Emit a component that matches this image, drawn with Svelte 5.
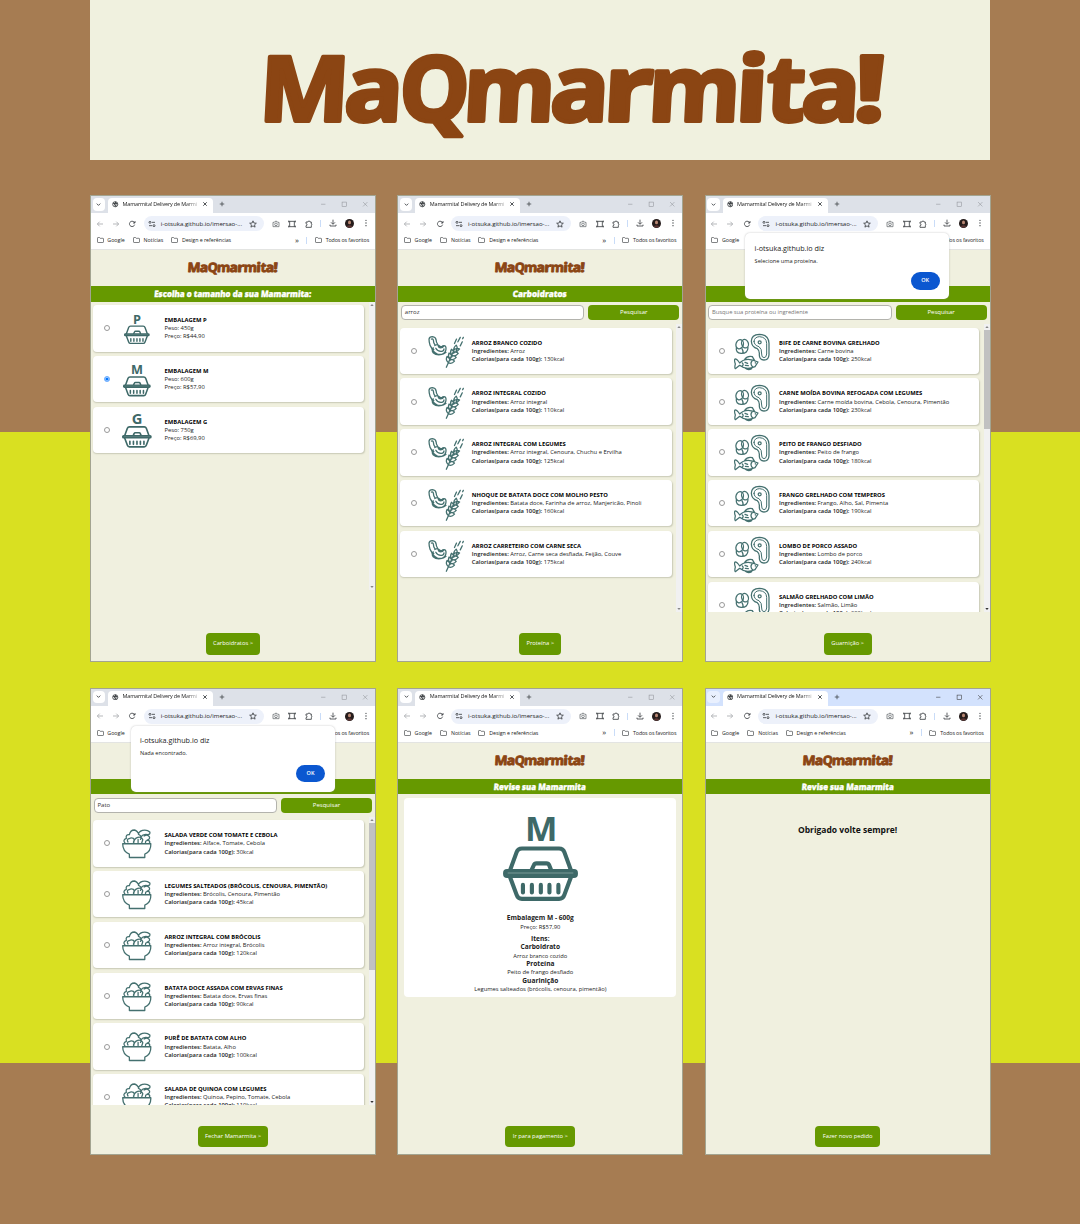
<script>
  const sizes = [
    { name: 'EMBALAGEM P', letter: 'P', weight: '450g', price: 'R$44,90' },
    { name: 'EMBALAGEM M', letter: 'M', weight: '600g', price: 'R$57,90', checked: true },
    { name: 'EMBALAGEM G', letter: 'G', weight: '750g', price: 'R$69,90' }
  ];
  const carbs = [
    ['ARROZ BRANCO COZIDO', 'Arroz', '130kcal'],
    ['ARROZ INTEGRAL COZIDO', 'Arroz integral', '110kcal'],
    ['ARROZ INTEGRAL COM LEGUMES', 'Arroz integral, Cenoura, Chuchu e Ervilha', '125kcal'],
    ['NHOQUE DE BATATA DOCE COM MOLHO PESTO', 'Batata doce, Farinha de arroz, Manjericão, Pinoli', '160kcal'],
    ['ARROZ CARRETEIRO COM CARNE SECA', 'Arroz, Carne seca desfiada, Feijão, Couve', '175kcal']
  ];
  const proteins = [
    ['BIFE DE CARNE BOVINA GRELHADO', 'Carne bovina', '250kcal'],
    ['CARNE MOÍDA BOVINA REFOGADA COM LEGUMES', 'Carne moída bovina, Cebola, Cenoura, Pimentão', '230kcal'],
    ['PEITO DE FRANGO DESFIADO', 'Peito de frango', '180kcal'],
    ['FRANGO GRELHADO COM TEMPEROS', 'Frango, Alho, Sal, Pimenta', '190kcal'],
    ['LOMBO DE PORCO ASSADO', 'Lombo de porco', '240kcal'],
    ['SALMÃO GRELHADO COM LIMÃO', 'Salmão, Limão', '200kcal']
  ];
  const sides = [
    ['SALADA VERDE COM TOMATE E CEBOLA', 'Alface, Tomate, Cebola', '30kcal'],
    ['LEGUMES SALTEADOS (BRÓCOLIS, CENOURA, PIMENTÃO)', 'Brócolis, Cenoura, Pimentão', '45kcal'],
    ['ARROZ INTEGRAL COM BRÓCOLIS', 'Arroz integral, Brócolis', '120kcal'],
    ['BATATA DOCE ASSADA COM ERVAS FINAS', 'Batata doce, Ervas finas', '90kcal'],
    ['PURÊ DE BATATA COM ALHO', 'Batata, Alho', '100kcal'],
    ['SALADA DE QUINOA COM LEGUMES', 'Quinoa, Pepino, Tomate, Cebola', '110kcal']
  ];
  const windows = [
    { kind: 'sizes', title: 'Escolha o tamanho da sua Mamarmita:', tw: 157, button: 'Carboidratos >', bw: 54 },
    { kind: 'food', icon: 'carb', title: 'Carboidratos', tw: 54, items: carbs, query: 'arroz', button: 'Proteína >', bw: 42 },
    { kind: 'food', icon: 'protein', items: proteins, placeholder: 'Busque sua proteína ou ingrediente', alert: 'Selecione uma proteína.', thumb: 99, button: 'Guarnição >', bw: 48 },
    { kind: 'food', icon: 'side', items: sides, query: 'Pato', alert: 'Nada encontrado.', thumb: 147, button: 'Fechar Mamarmita >', bw: 70 },
    { kind: 'review', title: 'Revise sua Mamarmita', tw: 92, button: 'Ir para pagamento >', bw: 70 },
    { kind: 'thanks', title: 'Revise sua Mamarmita', tw: 92, button: 'Fazer novo pedido', bw: 65, active: true }
  ];
  // letter, left edge, advance
  const letters = [
    ['M', -6, 90], ['a', 79, 59], ['Q', 134, 70], ['m', 198, 92], ['a', 285, 59], ['r', 338, 50],
    ['m', 383, 92], ['i', 470, 33], ['t', 501, 39], ['a', 536, 59], ['!', 588, 33]
  ];
</script>

{#snippet logo()}
  <svg class="logo" viewBox="0 0 622 92" role="img" aria-label="MaQmarmita!">
    <g transform="translate(0 70) skewX(-3)">
      {#each letters as [ch, x, adv]}
        <text class={ch === 'M' || ch === 'Q' ? 'caps' : 'low'} {x} y="0" textLength={adv} lengthAdjust="spacingAndGlyphs">{ch}</text>
      {/each}
    </g>
  </svg>
{/snippet}

{#snippet folder()}
  <svg class="folder" viewBox="0 0 14 12"><path d="M1 2.2Q1 1 2.2 1H5l1.4 1.6h5.4Q13 2.6 13 3.8v6Q13 11 11.8 11H2.2Q1 11 1 9.8z" /></svg>
{/snippet}

{#snippet box(letter)}
  <svg class="box" viewBox="0 0 226 258">
    <text x="115" y="76" text-anchor="middle" font-size={letter === 'M' ? 104 : 112}>{letter}</text>
    <path class="s" d="M21 164 41 109Q45 98 57 98H169Q181 98 185 109L205 164M86 163l7-15q2-5 8-5h30q6 0 8 5l6 15M21 184l20 54q4 12 16 12H169q12 0 16-12l20-54" />
    <rect x="0" y="160" width="226" height="27" rx="12" />
    <path class="line" d="M14 172H212" />
    <path class="s" d="M60 208v23M87 208v23M114 208v23M140 208v23M167 208v23" />
  </svg>
{/snippet}

{#snippet foodIcon(kind)}
  {#if kind === 'carb'}
    <svg class="carb" viewBox="0 0 106 94">
      <path d="M3 9Q4 2 13 2q10 1 11 10 0 7 4 12M3 9q0 10 3 18 3 9 11 13M10 9q5-2 6 4 0 7 4 12M20 28q8-6 14 1 4 4 9 0 9-3 10 6 1 14-12 19-16 4-26-5-5-7 1-14M10 33q3 14 18 20 16 4 25-5M23 36q5 10 17 9 7-1 7-7M29 27q2 7 8 8 7 0 9-5" />
      <path d="M54 92 78 38M59 77q-8-7-3-17 9 5 9 12M64 66q-6-8-2-16 8 4 8 12M69 55q-5-8 0-16 8 5 7 12M76 44q-2-10 7-17 6 9 0 16M61 79q9 4 17-5-5-7-14-3M66 68q10 4 17-5-5-7-14-3M71 57q10 4 18-6-5-6-15-2M76 46q10 2 17-8-6-4-14 1" />
      <path d="M78 22 84 9M88 17 95 4M95 29 101 17M102 8l2-4" />
    </svg>
  {:else if kind === 'protein'}
    <svg class="protein" viewBox="0 0 105 108">
      <ellipse cx="17" cy="31" rx="11" ry="14" transform="rotate(20 17 31)" />
      <ellipse cx="33" cy="29" rx="10" ry="13" transform="rotate(-20 33 29)" />
      <path d="M7 41Q5 57 21 58q20 1 21-17M24 44q4 7 3 13" />
      <path d="M52 22Q52 2 76 1q28 1 29 27V62q-1 16-15 16-15-1-14-17Q77 49 70 44 53 40 52 22Z" />
      <path d="M60 22Q61 9 76 8q21 1 22 20V60q-1 11-8 11-8-1-7-11Q84 44 75 38 60 34 60 22Z" stroke-width="3" />
      <circle cx="77" cy="25" r="4.500" />
      <path d="M17 87Q36 67 72 84l-9 14Q36 110 17 94L4 104q-3-2 0-14-4-12-1-15 5-1 14 12ZM32 76Q41 64 55 68l7 12M54 81q-7 8 2 18M33 85l8 3M34 94l9 1M25 87q5 5 0 9M64 86v1M34 103q9 7 19 1" />
    </svg>
  {:else}
    <svg class="side" viewBox="0 0 88 88">
      <path d="M2 44H86Q87 67 68 75v10H22V75Q2 67 2 44ZM9 42q-8-9 4-14-3-12 9-11Q25 3 37 3q8 1 14 14 10 5 4 14M18 39q-5-8 3-10 7-5 13-1 5 5 0 11M35 41q1-13 12-16 11-3 15 7l-3 9M48 40V31M49 16q0-8 12-12 14-3 22 5 2 7-6 8-14-3-21 7M66 21q12-6 16 3 2 7-7 9M70 41q0-8 9-7 6 4 3 7" />
    </svg>
  {/if}
{/snippet}

<div class="page">
  <header>{@render logo()}</header>
  <main>
    {#each windows as w}
      <section class="window" class:active={w.active}>
        <div class="tabs">
          <span class="chev"><svg viewBox="0 0 24 24"><path d="M6 9l6 6 6-6" /></svg></span>
          <div class="tab">
            <svg viewBox="0 0 24 24"><circle cx="12" cy="12" r="9.5" /><path d="M4 7l6 3v4l4 2v5M12 3l2 4-4 3M21 11l-5-1v-4" stroke-width="4" /></svg>
            <span class="tabname">Mamarmita! Delivery de Marmi</span>
            <svg class="x" viewBox="0 0 24 24"><path d="M5 5l14 14M19 5L5 19" /></svg>
          </div>
          <svg class="plus" viewBox="0 0 24 24"><path d="M12 3v18M3 12h18" /></svg>
          <div class="controls">
            <svg viewBox="0 0 24 24"><path d="M4 12h16" /></svg>
            <svg viewBox="0 0 24 24"><rect x="4" y="4" width="16" height="16" /></svg>
            <svg viewBox="0 0 24 24"><path d="M4 4l16 16M20 4L4 20" /></svg>
          </div>
        </div>
        <div class="toolbar">
          <svg class="dim" viewBox="0 0 24 24"><path d="M21 12H4M11 5l-7 7 7 7" /></svg>
          <svg class="dim" viewBox="0 0 24 24"><path d="M3 12h17M13 5l7 7-7 7" /></svg>
          <svg viewBox="0 0 24 24"><path d="M20 14a8 8 0 1 1-2-8l3 3M21 3v6h-6" /></svg>
          <div class="url">
            <svg viewBox="0 0 24 24"><circle cx="6" cy="7" r="3" /><path d="M12 7h9M3 17h9" /><circle cx="18" cy="17" r="3" /></svg>
            <span>i-otsuka.github.io/imersao-...</span>
            <svg viewBox="0 0 24 24"><path d="M12 2.5l2.8 6.6 7.2.6-5.4 4.7 1.6 7L12 17.7l-6.2 3.7 1.6-7L2 9.7l7.2-.6z" /></svg>
          </div>
          <div class="tools">
            <svg class="dim2" viewBox="0 0 24 24"><path d="M3 7h4l2-3h6l2 3h4v13H3z" /><circle cx="12" cy="13" r="4" /></svg>
            <svg viewBox="0 0 24 24"><path d="M2 7V2M2 4h20M22 2v5M22 17v5M22 20H2M2 22v-5M5 4v16M19 4v16" /></svg>
            <svg viewBox="0 0 24 24"><path d="M3 6h6a3 3 0 0 1 6 0h4v6a3 3 0 0 1 0 5v5H3v-5a3 3 0 0 0 0-6z" /></svg>
          </div>
          <i class="sep"></i>
          <div class="tools right">
            <svg viewBox="0 0 24 24"><path d="M12 2v13M6 10l6 6 6-6M3 17v4h18v-4" /></svg>
            <svg class="avatar" viewBox="0 0 24 24"><circle cx="12" cy="12" r="12" fill="#251c1b" /><ellipse cx="12" cy="9" rx="4" ry="5" fill="#b98773" /><path d="M4 20q8-7 16 0-8 6-16 0" fill="#5c3533" /></svg>
            <svg viewBox="0 0 24 24"><path class="dots" d="M12 4v.1M12 12v.1M12 20v.1" /></svg>
          </div>
        </div>
        <div class="bookmarks">
          {@render folder()}<span class="b1">Google</span>
          {@render folder()}<span class="b2">Notícias</span>
          {@render folder()}<span class="b3">Design e referências</span>
          <span class="more">»</span><i class="sep"></i>
          {@render folder()}<span class="b4">Todos os favoritos</span>
        </div>

        <div class="brand">{@render logo()}</div>
        <div class="band">
          {#if w.title}
            <svg viewBox="0 0 286 16"><text transform="translate(142.500 11) skewX(-5)" text-anchor="middle" textLength={w.tw} lengthAdjust="spacingAndGlyphs">{w.title}</text></svg>
          {/if}
        </div>

        {#if w.kind === 'food'}
          <div class="search">
            <div class="input" class:ph={w.placeholder}>{w.query ?? w.placeholder}</div>
            <div class="go">Pesquisar</div>
          </div>
        {/if}

        {#if w.kind === 'sizes' || w.kind === 'food'}
          <div class="scroll">
            <div class="list">
              {#if w.kind === 'sizes'}
                {#each sizes as s}
                  <article>
                    <span class="radio" class:on={s.checked}></span>
                    <div class="pic"><span class={'pack p' + s.letter}>{@render box(s.letter)}</span></div>
                    <div class="info"><b>{s.name}</b><span>Peso: {s.weight}</span><span>Preço: {s.price}</span></div>
                  </article>
                {/each}
              {:else}
                {#each w.items as [name, ing, kcal]}
                  <article>
                    <span class="radio"></span>
                    <div class="pic">{@render foodIcon(w.icon)}</div>
                    <div class="info"><b>{name}</b><span><strong>Ingredientes:</strong> {ing}</span><span><strong>Calorias(para cada 100g):</strong> {kcal}</span></div>
                  </article>
                {/each}
              {/if}
            </div>
            <div class="bar">
              <svg viewBox="0 0 6 6"><path d="M1.3 4 3 2 4.7 4z" /></svg>
              <i class="thumb" style:height="{w.thumb ?? 0}px"></i>
              <svg viewBox="0 0 6 6" class:dark={w.thumb}><path d="M1.3 2 3 4 4.7 2z" /></svg>
            </div>
          </div>
        {:else if w.kind === 'review'}
          <div class="review">
            {@render box('M')}
            <b class="first">Embalagem M - 600g</b><span>Preço: R$57,90</span>
            <b class="items">Itens:</b><b>Carboidrato</b><span>Arroz branco cozido</span>
            <b>Proteína</b><span>Peito de frango desfiado</span>
            <b>Guarinição</b><span>Legumes salteados (brócolis, cenoura, pimentão)</span>
          </div>
        {:else}
          <p class="thanks">Obrigado volte sempre!</p>
        {/if}

        <footer><div class="next" style:width="{w.bw}px">{w.button}</div></footer>

        {#if w.alert}
          <div class="alert">
            <h2>i-otsuka.github.io diz</h2>
            <p>{w.alert}</p>
            <div class="ok">OK</div>
          </div>
        {/if}
      </section>
    {/each}
  </main>
</div>

<style>
  :global(body) { margin: 0; }
  * { box-sizing: border-box; }
  .page {
    width: 1080px; height: 1224px; overflow: hidden; padding: 0 90px;
    background: linear-gradient(#a67c52 432px, #d9e021 432px 1063.5px, #a67c52 1063.5px);
    font-family: 'Open Sans', 'Noto Sans', sans-serif; color: #222;
  }
  svg { fill: none; stroke: #3c4043; stroke-width: 2; display: block; flex: none; }
  header { height: 160px; background: #f0f1df; padding: 50.5px 0 0 174px; }
  header .logo { width: 622px; height: 92px; }
  .logo { overflow: visible; }
  .logo text {
    font-family: 'Open Sans', sans-serif; font-weight: 700; fill: #8b4513;
    stroke: #8b4513; stroke-width: 4; stroke-linejoin: round;
  }
  .caps { font-size: 90px; }
  .low { font-size: 91px; }
  main { display: grid; grid-template-columns: repeat(3, 286px); grid-auto-rows: 467px; gap: 25.6px 21.3px; margin-top: 35.4px; }
  .window {
    position: relative; display: flex; flex-direction: column; background: #f0f0df;
    overflow: hidden; outline: 1px solid #a3a490; outline-offset: -1px;
  }
  .tabs { height: 18px; flex: none; background: #dde1e8; display: flex; align-items: center; padding-left: 2.5px; }
  .active .tabs { background: #d3e2fd; }
  .chev { width: 12.5px; height: 12.5px; border-radius: 4px; background: #fff; display: grid; place-items: center; }
  .active .chev { background: #e9f0fe; }
  .chev svg { width: 7px; height: 7px; stroke-width: 3; }
  .tab { margin: 3px 0 0 3px; height: 15px; width: 105px; border-radius: 4px 4px 0 0; background: #fff; display: flex; align-items: center; padding: 0 5px 3px 4px; }
  .tab svg { width: 6.5px; height: 6.5px; stroke-width: 3; }
  .tabname {
    flex: 1; margin: 0 3px 0 4px; white-space: nowrap; font-size: 5.5px; line-height: 9px; letter-spacing: -0.18px;
    -webkit-mask-image: linear-gradient(90deg, #000 82%, #0003); mask-image: linear-gradient(90deg, #000 82%, #0003);
  }
  .tab .x { width: 6px; height: 6px; stroke-width: 3.5; }
  .plus { width: 6px; height: 6px; margin-left: 6px; stroke-width: 3; }
  .controls { margin-left: auto; display: flex; gap: 14.5px; padding-right: 7.5px; }
  .controls svg { width: 6.5px; height: 6.5px; stroke: #8d9197; }
  .active .controls svg { stroke: #333; }
  .toolbar { height: 20.5px; flex: none; background: #fff; display: flex; align-items: center; padding-left: 5.5px; }
  .toolbar > svg { width: 8px; height: 8px; margin-right: 8.4px; stroke-width: 2.5; }
  .toolbar > svg:nth-of-type(3) { margin-right: 7.5px; }
  .toolbar .dim { stroke: #a7aaad; }
  .url { width: 120px; height: 15px; border-radius: 8px; background: #edf1fa; display: flex; align-items: center; padding: 0 7px 0 4px; }
  .url svg { width: 8px; height: 8px; stroke-width: 2.5; }
  .url span { flex: 1; white-space: nowrap; font-size: 6.1px; padding-left: 5px; line-height: 10px; }
  .tools { display: flex; gap: 8.5px; margin-left: 8px; }
  .tools svg { width: 8px; height: 8px; stroke-width: 2.5; }
  .tools .dim2 { stroke: #74787c; }
  .sep { width: 1px; height: 7px; background: #c9dcf8; margin-left: 7px; flex: none; }
  .right { margin-left: 8px; gap: 8px; }
  .tools .avatar { width: 9px; height: 9px; stroke: none; }
  .tools .dots { stroke-width: 4; stroke-linecap: round; }
  .bookmarks { height: 16.5px; flex: none; background: #fff; border-bottom: 1px solid #e3e4e2; display: flex; align-items: center; padding: 0 0 3px 6.5px; font-size: 5.3px; line-height: 8px; white-space: nowrap; }
  .folder { width: 7px; height: 6px; stroke-width: 1.3; margin-right: 3.8px; }
  .b1 { width: 25.5px; }
  .b2 { width: 27.5px; }
  .b3 { width: 113px; letter-spacing: -0.05px; }
  .more { font-size: 8px; width: 11.5px; line-height: 7px; margin-top: -2px; }
  .bookmarks .sep { margin: 0 7.5px 0 0; }
  .b4 { letter-spacing: -0.1px; }
  .brand { height: 35.7px; flex: none; padding: 12px 0 0 98px; }
  .brand .logo { width: 90px; height: 14px; }
  .brand .logo text { stroke-width: 6; }
  .band { height: 15.5px; flex: none; background: #690; }
  .band svg { width: 286px; height: 16px; overflow: visible; }
  .band text { font: 800 8.8px 'Open Sans', sans-serif; fill: #fff; stroke: #fff; stroke-width: 0.35; }
  .search { display: flex; gap: 4px; height: 18px; padding: 3.5px 4px 0 3.5px; margin-bottom: 4.5px; flex: none; }
  .input { width: 183.5px; height: 15px; border: 1px solid #b3b3ad; border-radius: 4px; background: #fff; padding-left: 3px; font-size: 6px; line-height: 13px; color: #333; }
  .ph { color: #777; font-size: 5.85px; letter-spacing: -0.05px; }
  .go { width: 91px; height: 15px; border-radius: 4px; background: #690; color: #fff; font-size: 6px; line-height: 15px; text-align: center; }
  .scroll { display: flex; height: 288px; flex: none; overflow: hidden; }
  .list { width: 279px; padding: 3.5px 4.8px 0 3.2px; display: flex; flex-direction: column; gap: 4.3px; }
  article { height: 46.5px; flex: none; border-radius: 4px; background: #fff; box-shadow: 0.5px 1px 1.5px #c8c9b5; display: flex; align-items: center; }
  .radio { width: 6px; height: 6px; border: 0.7px solid #999; border-radius: 50%; margin-left: 10.8px; flex: none; }
  .on { border: 1px solid #7ab5ff; background: #0075ff; box-shadow: inset 0 0 0 0.4px #fff; }
  .pic { width: 54.5px; display: grid; place-items: center; flex: none; }
  .pic svg:not(.box) { stroke: #44706f; stroke-width: 3.8; stroke-linecap: round; stroke-linejoin: round; overflow: visible; }
  .carb { width: 36px; height: 32px; margin: 3px 0 0 2px; }
  .protein { width: 35px; height: 36px; margin-top: 2px; }
  .side { width: 29.5px; height: 29.5px; margin-top: 1px; }
  .box { width: 100%; overflow: visible; }
  .box text { font-family: 'Open Sans', sans-serif; font-weight: 700; fill: #3e6968; stroke: none; }
  .box rect { fill: #3e6968; stroke: none; }
  .box .s { stroke: #3e6968; stroke-width: 12.5; stroke-linecap: round; }
  .box .line { stroke: #9ab3b1; stroke-width: 2; }
  .pack { margin-top: 2.5px; }
  .pP { width: 25.7px; }
  .pM { width: 27.7px; }
  .pG { width: 29.7px; }
  .info { font-size: 5.83px; line-height: 8.15px; display: flex; flex-direction: column; white-space: nowrap; color: #222; }
  .info b { color: #000; font-weight: 700; }
  .info strong { font-weight: 600; }
  .bar { width: 7px; background: #f1f1f1; display: flex; flex-direction: column; padding-right: 1px; }
  .bar svg { width: 6px; height: 6px; }
  .bar path { fill: #888; stroke: none; }
  .bar svg:last-child { margin-top: auto; }
  .bar .dark path { fill: #333; }
  .thumb { background: #c1c1c1; width: 6px; }
  .review { margin: 3.5px 7px 0; height: 199px; border-radius: 4px; background: #fff; display: flex; flex-direction: column; align-items: center; padding-top: 18px; font-size: 5.8px; line-height: 8.35px; }
  .review .box { width: 75px; height: 85.5px; }
  .review b { font-size: 6.6px; }
  .review .first { margin-top: 13px; }
  .review .items { margin-top: 4px; }
  .thanks { margin: 30px 0 0; text-align: center; font-size: 8.5px; line-height: 12px; font-weight: 700; color: #111; }
  footer { margin-top: auto; padding-bottom: 7.5px; display: flex; justify-content: center; }
  .next { height: 21.5px; border-radius: 4px; background: #690; color: #fff; font-size: 5.8px; line-height: 21.5px; text-align: center; white-space: nowrap; }
  .alert { position: absolute; left: 40.5px; top: 38px; width: 204px; height: 66px; border-radius: 5px; background: #fff; box-shadow: 0 0 2px #8888; padding: 9.5px; }
  .alert h2 { margin: 0; font-size: 7.2px; line-height: 10px; font-weight: 500; }
  .alert p { margin: 4px 0 0; font-size: 5.6px; line-height: 8px; }
  .ok { width: 29px; height: 17.5px; margin: 7.5px 0 0 auto; border-radius: 9px; background: #0b57d0; color: #fff; font-size: 5.5px; font-weight: 600; line-height: 17.5px; text-align: center; }
</style>
